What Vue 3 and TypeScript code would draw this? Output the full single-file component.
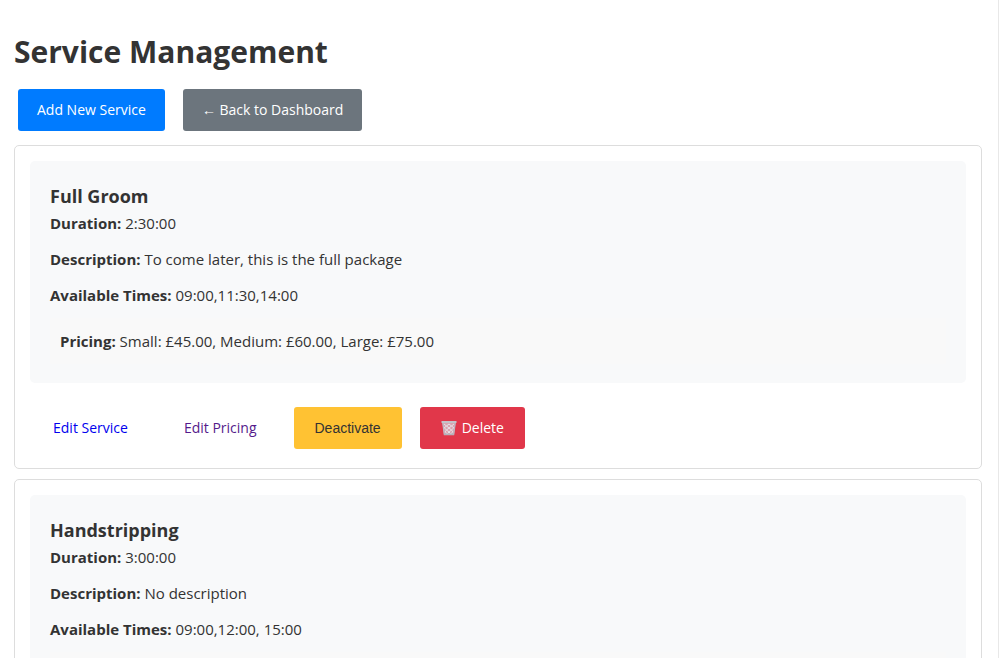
<script setup lang="ts">
interface Price {
  size: string
  amount: string
}

interface Service {
  id: number
  name: string
  duration: string
  description: string
  times: string
  prices: Price[]
}

const services: Service[] = [
  {
    id: 1,
    name: 'Full Groom',
    duration: '2:30:00',
    description: 'To come later, this is the full package',
    times: '09:00,11:30,14:00',
    prices: [
      { size: 'Small', amount: '£45.00' },
      { size: 'Medium', amount: '£60.00' },
      { size: 'Large', amount: '£75.00' },
    ],
  },
  {
    id: 2,
    name: 'Handstripping',
    duration: '3:00:00',
    description: 'No description',
    times: '09:00,12:00, 15:00',
    prices: [],
  },
]

const priceList = (prices: Price[]): string =>
  prices.map((p) => `${p.size}: ${p.amount}`).join(', ')
</script>

<template>
  <main class="page">
    <h1 class="title">Service Management</h1>
    <nav class="toolbar">
      <a class="btn primary" href="#add">Add New Service</a>
      <a class="btn secondary" href="#dashboard">← Back to Dashboard</a>
    </nav>

    <article v-for="service in services" :key="service.id" class="card">
      <section class="info">
        <h3 class="name">{{ service.name }}</h3>
        <p><strong>Duration:</strong> {{ service.duration }}</p>
        <p><strong>Description:</strong> {{ service.description }}</p>
        <p><strong>Available Times:</strong> {{ service.times }}</p>
        <div class="pricing">
          <template v-if="service.prices.length">
            <strong>Pricing:</strong> {{ priceList(service.prices) }}
          </template>
        </div>
      </section>
      <div v-if="service.prices.length" class="actions">
        <a class="btn link" href="#edit-service">Edit Service</a>
        <a class="btn link seen" href="#edit-pricing">Edit Pricing</a>
        <button class="btn warning" type="button">Deactivate</button>
        <a class="btn danger" href="#delete">
          <svg class="bin" viewBox="0 0 16 16" aria-hidden="true">
            <path d="M1.500 2.500 3 15h10l1.500-12.500z" fill="#d9a3af" />
            <path
              d="M3 4l2.500 2L8 4l2.500 2L13 4M3 8l2.500-2L8 8l2.500-2L13 8M3.500 8l2 2L8 8l2.500 2 2-2M4 12l1.500-2L8 12l2.500-2 1.500 2M4.500 12l1.500 2 2-2 2 2 1.500-2"
              fill="none"
              stroke="#e8e2e8"
              stroke-width="1"
            />
            <path d="M1.800 3 3.400 14.500h9.200L14.200 3" fill="none" stroke="#bdb8c2" stroke-width="1.300" />
            <path d="M.5 1h15v2H.5z" fill="#c3c3c9" />
            <path d="M3 13.500h10V15H3z" fill="#b5b2bb" />
          </svg>
          Delete
        </a>
      </div>
    </article>
  </main>
</template>

<style>
body {
  margin: 0;
  background: #fff;
}
</style>

<style scoped>
.page {
  box-sizing: border-box;
  min-height: 100vh;
  padding: 30px 16px 0 14px;
  border-right: 1px solid #e8e8e8;
  color: #333;
  font-family: 'Segoe UI', 'Open Sans', 'Noto Sans', sans-serif;
  font-size: 15px;
  line-height: 26px;
}

.title {
  margin: 0 0 15px;
  font-size: 30px;
  line-height: 44px;
  font-weight: 700;
}

.toolbar {
  display: flex;
  gap: 18px;
  margin: 0 4px 14px;
}

.btn {
  display: inline-flex;
  align-items: center;
  justify-content: center;
  box-sizing: border-box;
  height: 42px;
  padding: 0 19px;
  border: 0;
  border-radius: 3px;
  font-size: 14px;
  line-height: 22px;
  text-decoration: none;
  white-space: nowrap;
}

.primary {
  background: #007bff;
  color: #fff;
}

.secondary {
  background: #6c757d;
  color: #fff;
}

.card {
  margin-bottom: 10px;
  padding: 15px 15px 19px;
  border: 1px solid #ddd;
  border-radius: 5px;
}

.info {
  padding: 21px 20px 19px;
  border-radius: 5px;
  background: #f8f9fa;
}

.name {
  margin: 0;
  font-size: 18px;
  line-height: 28px;
  font-weight: 700;
}

p {
  margin: 0 0 10px;
}

strong {
  font-weight: 700;
}

.pricing {
  min-height: 26px;
  padding: 10px;
  background: #f9f9f9;
}

.actions {
  display: flex;
  gap: 18px;
  margin: 24px 4px 0;
}

.link {
  color: #0000ee;
}

.seen {
  color: #551a8b;
}

.warning {
  padding: 0 21px;
  background: #ffc233;
  color: #333;
  font-family: Arial, 'Liberation Sans', sans-serif;
}

.danger {
  gap: 5px;
  padding: 0 21px;
  background: #e1374a;
  color: #fff;
}

.bin {
  width: 16px;
  height: 16px;
}
</style>
